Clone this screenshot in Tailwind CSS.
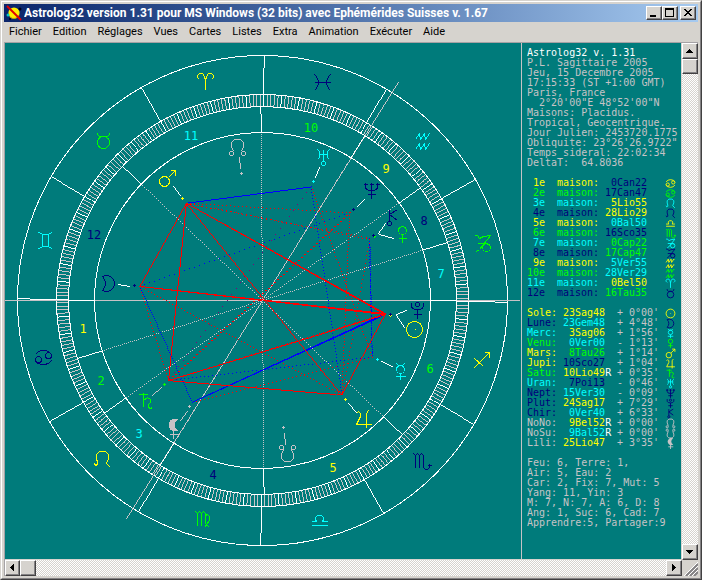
<!DOCTYPE html>
<html lang="fr">
<head>
<meta charset="utf-8">
<meta name="viewport" content="width=device-width, initial-scale=1">
<title>Astrolog32</title>
<script src="https://cdn.jsdelivr.net/npm/@tailwindcss/browser@4"></script>
</head>
<body class="h-screen min-h-[400px] overflow-hidden bg-[#d6d3ce]">
<div class="flex h-full flex-col border border-t-[#d6d3ce] border-l-[#d6d3ce] border-r-[#424142] border-b-[#424142] bg-[#d6d3ce] font-['Roboto',sans-serif]">
<div class="flex min-h-0 flex-1 flex-col border border-t-white border-l-white border-r-[#848284] border-b-[#848284] p-[2px]">

  <header class="flex h-[18px] shrink-0 items-center bg-linear-to-r from-[#0a246a] to-[#a6caf0] px-[2px]">
    <svg class="size-4 shrink-0" viewBox="0 0 16 16" aria-hidden="true">
      <circle cx="8" cy="8" r="5.6" fill="#ffef00"/>
      <path d="M4 12a5.600 5.600 0 0 0 9-2" fill="none" stroke="#c9a000" stroke-width="1"/>
      <path d="M1 1L15 15" stroke="#e00000" stroke-width="2"/>
      <circle cx="2" cy="10" r="1.500" fill="#00c8c8"/>
      <circle cx="14" cy="4" r="1.500" fill="#000018"/>
      <circle cx="4" cy="14" r="1" fill="#000018"/>
    </svg>
    <h1 class="ml-[2px] min-w-0 flex-1 truncate text-[12px] leading-[18px] font-bold text-white">Astrolog32 version 1.31 pour MS Windows (32 bits) avec Ephémérides Suisses v. 1.67</h1>
    <button aria-label="Réduire" class="flex h-[14px] w-4 shrink-0 items-center justify-center border border-t-white border-l-white border-r-[#424142] border-b-[#424142] bg-[#d6d3ce] shadow-[inset_-1px_-1px_0_#848284]"><svg class="h-3 w-[14px]" viewBox="0 0 14 12" shape-rendering="crispEdges"><path d="M3 8h6v2H3z"/></svg></button>
    <button aria-label="Agrandir" class="flex h-[14px] w-4 shrink-0 items-center justify-center border border-t-white border-l-white border-r-[#424142] border-b-[#424142] bg-[#d6d3ce] shadow-[inset_-1px_-1px_0_#848284]"><svg class="h-3 w-[14px]" viewBox="0 0 14 12" shape-rendering="crispEdges"><path fill-rule="evenodd" d="M2 1h9v9H2zM3 3v6h7V3z"/></svg></button>
    <button aria-label="Fermer" class="ml-[2px] flex h-[14px] w-4 shrink-0 items-center justify-center border border-t-white border-l-white border-r-[#424142] border-b-[#424142] bg-[#d6d3ce] shadow-[inset_-1px_-1px_0_#848284]"><svg class="h-3 w-[14px]" viewBox="0 0 14 12" shape-rendering="crispEdges"><path d="M3 2h2v1h1v1h2V3h1V2h2v1h-1v1H9v1H8v1h1v1h1v1h1v1H9V8H8V7H6v1H5v1H3V8h1V7h1V6h1V5H5V4H4V3H3z"/></svg></button>
  </header>

  <nav class="flex h-5 shrink-0 items-center gap-[11px] px-[5px] text-[11px] leading-5 text-black">
    <button>Fichier</button><button>Edition</button><button>Réglages</button><button>Vues</button><button>Cartes</button><button>Listes</button><button>Extra</button><button>Animation</button><button>Exécuter</button><button>Aide</button>
  </nav>

  <div class="flex min-h-0 flex-1 flex-col border-t border-l border-[#a5a2a5]">
    <div class="flex min-h-0 flex-1">
      <main class="flex min-w-0 flex-1 border-r border-b border-[#d6d3ce] bg-[#007b7b]">
        <div class="min-w-0 flex-1">
          <svg id="chart" class="size-full font-['DejaVu_Sans_Mono',monospace] text-[12px]" viewBox="5 43 516 516" shape-rendering="crispEdges" role="img" aria-label="Thème astral"></svg>
        </div>
        <aside class="w-40 shrink-0 overflow-hidden border-l border-[#c6c3c6] pt-[5px] pl-[5px] font-['DejaVu_Sans_Mono',monospace] text-[10px] leading-[10px] text-[#c6c3c6] *:whitespace-pre">
          <h2 class="text-white">Astrolog32 v. 1.31</h2>
          <p>P.L. Sagittaire 2005</p>
          <p>Jeu, 15 Decembre 2005</p>
          <p>17:15:33 (ST +1:00 GMT)</p>
          <p>Paris, France</p>
          <p>  2°20'00"E 48°52'00"N</p>
          <p>Maisons: Placidus.</p>
          <p>Tropical, Geocentrique.</p>
          <p>Jour Julien: 2453720.1775</p>
          <p>Obliquite: 23°26'26.9722"</p>
          <p>Temps sideral: 22:02:34</p>
          <p>DeltaT:  64.8036</p>
          <table class="mt-[10px] table-fixed border-collapse" aria-label="Maisons"><tbody id="houses"></tbody></table>
          <table class="mt-[10px] table-fixed border-collapse" aria-label="Planètes"><tbody id="planets"></tbody></table>
          <p class="mt-[10px]">Feu: 6, Terre: 1,</p>
          <p>Air: 5, Eau: 2</p>
          <p>Car: 2, Fix: 7, Mut: 5</p>
          <p>Yang: 11, Yin: 3</p>
          <p>M: 7, N: 7, A: 6, D: 8</p>
          <p>Ang: 1, Suc: 6, Cad: 7</p>
          <p>Apprendre:5, Partager:9</p>
        </aside>
      </main>
      <div class="flex w-4 shrink-0 flex-col bg-[repeating-conic-gradient(#ffffff_0_25%,#d6d3ce_0_50%)] bg-[length:2px_2px]">
        <button aria-label="Haut" class="flex h-4 shrink-0 items-center justify-center border border-t-white border-l-white border-r-[#424142] border-b-[#424142] bg-[#d6d3ce] shadow-[inset_-1px_-1px_0_#848284]"><svg class="size-2" viewBox="0 0 8 8" shape-rendering="crispEdges"><path d="M3 2h1v1h1v1h1v1h1v1H0V5h1V4h1V3h1z"/></svg></button>
        <button aria-label="Position verticale" class="h-[15px] shrink-0 border border-t-white border-l-white border-r-[#424142] border-b-[#424142] bg-[#d6d3ce] shadow-[inset_-1px_-1px_0_#848284]"></button>
        <div class="flex-1"></div>
        <button aria-label="Bas" class="flex h-4 shrink-0 items-center justify-center border border-t-white border-l-white border-r-[#424142] border-b-[#424142] bg-[#d6d3ce] shadow-[inset_-1px_-1px_0_#848284]"><svg class="size-2" viewBox="0 0 8 8" shape-rendering="crispEdges"><path d="M0 2h7v1H6v1H5v1H4v1H3V5H2V4H1V3H0z"/></svg></button>
      </div>
    </div>
    <div class="flex h-4 shrink-0">
      <div class="flex min-w-0 flex-1 bg-[repeating-conic-gradient(#ffffff_0_25%,#d6d3ce_0_50%)] bg-[length:2px_2px]">
        <button aria-label="Gauche" class="flex w-[15px] shrink-0 items-center justify-center border border-t-white border-l-white border-r-[#424142] border-b-[#424142] bg-[#d6d3ce] shadow-[inset_-1px_-1px_0_#848284]"><svg class="size-2" viewBox="0 0 8 8" shape-rendering="crispEdges"><path d="M5 0v7H4V6H3V5H2V4H1V3h1V2h1V1h1V0z"/></svg></button>
        <button aria-label="Position horizontale" class="w-4 shrink-0 border border-t-white border-l-white border-r-[#424142] border-b-[#424142] bg-[#d6d3ce] shadow-[inset_-1px_-1px_0_#848284]"></button>
        <div class="flex-1"></div>
        <button aria-label="Droite" class="flex w-4 shrink-0 items-center justify-center border border-t-white border-l-white border-r-[#424142] border-b-[#424142] bg-[#d6d3ce] shadow-[inset_-1px_-1px_0_#848284]"><svg class="size-2" viewBox="0 0 8 8" shape-rendering="crispEdges"><path d="M2 0h1v1h1v1h1v1h1v1H5v1H4v1H3v1H2z"/></svg></button>
      </div>
      <svg class="size-4 shrink-0" viewBox="0 0 16 16" aria-hidden="true"><path d="M4 16L16 4M8 16L16 8M12 16L16 12" stroke="#848284" stroke-width="2"/><path d="M2 16L16 2M6 16L16 6M10 16L16 10" stroke="#fff"/></svg>
    </div>
  </div>
</div>
</div>

<script>
const YELLOW = '#ffff00', GREEN = '#00ff00', CYAN = '#00ffff', NAVY = '#00007b', GRAY = '#c6c3c6', WHITE = '#ffffff', RED = '#ff0000', BLUE = '#0000ff', PURPLE = '#84007b';
const textClass = {
  [YELLOW]: 'text-[#ffff00]', [GREEN]: 'text-[#00ff00]', [CYAN]: 'text-[#00ffff]',
  [NAVY]: 'text-[#00007b]', [GRAY]: 'text-[#c6c3c6]'
};
const circ = (x, y, r) => `<circle cx="${x}" cy="${y}" r="${r}"/>`;
const path = d => `<path d="${d}"/>`;

// Glyphs are drawn around (0,0) in a box of -10..10.
const glyphs = {
  Bel: path('M-6 -2L-8 -4V-6L-6 -8H-3L-1 -5L0 -1L1 -5L3 -8H6L8 -6V-4L6 -2M0 -1V8'),
  Tau: path('M-6 -8V-6L-4 -4H4L6 -6V-8') + circ(0, 2, 6),
  Gem: path('M-7 -8Q0 -4 7 -8M-7 8Q0 4 7 8M-3 -6V6M3 -6V6'),
  Can: circ(-5, 2, 3) + circ(5, -2, 3) + path('M-8 -3Q-5 -7 0 -7Q7 -7 8 -2M8 3Q5 7 0 7Q-7 7 -8 2'),
  Lio: path('M-8 4L-7 6L-5 5V3L-6 -1V-5L-3 -8H3L6 -5V-1L4 4L8 8'),
  Vie: path('M-7 -8L-5 -6V6M-5 -6L-3 -8L-1 -6V6M-1 -6L1 -8L3 -6V4L7 8M3 -4L5 -5L7 -3V1L2 8'),
  Bal: path('M-8 5H8M-8 1H-3L-4 -1V-3L-2 -5H2L4 -3V-1L3 1H8'),
  Sco: path('M-8 -8L-6 -6V6M-6 -6L-4 -8L-2 -6V6M-2 -6L0 -8L2 -6V6L4 8H6L8 6V2M6 4H10'),
  Sag: path('M-8 8L8 -8M3 -8H8V-3M-7 -2L2 6'),
  Cap: path('M-8 -8H-5L-3 -5L1 -7L8 -8L1 1L-3 6L-6 8M-5 0H3L7 1') + circ(4, 4, 4),
  Ver: path('M-8 -2L-4 -8L-3 -2L1 -8L2 -2L6 -8L7 -7M-8 8L-4 2L-3 8L1 2L2 8L6 2L7 3'),
  Poi: path('M-8 -8Q0 0 -8 8M8 -8Q0 0 8 8M-8 0H8'),
  Sole: circ(0, 0, 8) + path('M0 0H1'),
  Lune: path('M-6 -7Q-2 -9 2 -7Q6 -4 6 0Q6 4 2 7Q-2 9 -6 7Q0 0 -6 -7'),
  Merc: circ(0, -2, 4) + path('M-4 -8L-2 -6H2L4 -8M0 2V8M-5 5H5'),
  Venu: circ(0, -4, 4) + path('M0 0V8M-4 4H4'),
  Mars: circ(-3, 3, 5) + path('M1 -1L8 -8M3 -8H8V-3'),
  Jupi: path('M-7 -5L-5 -7L-3 -5V-2L-7 6H8M5 -8L3 -5V9'),
  Satu: path('M-2 -8V6M-7 -6H2M-2 0L2 -3L5 -1V2L3 4V7L5 8L7 7'),
  Uran: path('M-6 -8L-4 -6V0L-6 2M6 -8L4 -6V0L6 2M-4 -3H4M0 -8V4') + circ(0, 6, 2),
  Nept: path('M-6 -8V-4Q-6 0 0 0Q6 0 6 -4V-8M0 -8V8M-4 4H4M-8 -6H-4M4 -6H8M-2 -6H2'),
  Plut: circ(0, -6, 2) + path('M-6 -8V-4Q-5 -1 0 -1Q5 -1 6 -4V-8M0 -1V8M-4 4H4'),
  Chir: circ(-3, 6, 2) + path('M-3 -8V4M5 -8L-3 -3L5 3'),
  NoNo: circ(-6, 6, 2) + circ(6, 6, 2) + path('M-4 4L-6 -1V-5L-3 -8H3L6 -5V-1L4 4'),
  NoSu: circ(-6, -6, 2) + circ(6, -6, 2) + path('M-4 -4L-6 1V5L-3 8H3L6 5V1L4 -4'),
  Lili: '<path fill="currentColor" stroke="none" d="M5 -9A6.500 6.500 0 1 0 5 2A6 6 0 0 1 5 -9Z"/>' + path('M0 2V10M-4 6H5')
};

const signs = [
  ['Bel', 205, 81, YELLOW], ['Tau', 103, 140, GREEN], ['Gem', 45, 240, CYAN], ['Can', 43, 357, NAVY],
  ['Lio', 102, 459, YELLOW], ['Vie', 202, 519, GREEN], ['Bal', 319, 520, CYAN], ['Sco', 421, 461, NAVY],
  ['Sag', 481, 360, YELLOW], ['Cap', 482, 243, GREEN], ['Ver', 423, 141, CYAN], ['Poi', 322, 82, NAVY]
];
const signColor = Object.fromEntries(signs.map(s => [s[0], s[3]]));
signColor.Bel = YELLOW;

// number, position, longitude, label centre
const houses = [
  ['1', ' 0Can22', 90.37, 83, 328], ['2', '17Can47', 107.78, 101, 380], ['3', ' 5Lio55', 125.92, 139, 433],
  ['4', '28Lio29', 148.48, 213, 474], ['5', ' 0Bal50', 180.83, 333, 467], ['6', '16Sco35', 226.58, 430, 368],
  ['7', ' 0Cap22', 270.37, 441, 273], ['8', '17Cap47', 287.78, 424, 220], ['9', ' 5Ver55', 305.92, 386, 168],
  ['10', '28Ver29', 328.48, 311, 127], ['11', ' 0Bel50', 0.83, 191, 135], ['12', '16Tau35', 46.58, 94, 234]
];
const houseColors = [YELLOW, GREEN, CYAN, NAVY];

// name, position, retrograde, latitude, longitude, colour, glyph centre, pointer line
const planets = [
  ['Sole', '23Sag48', ' ', "+ 0°00'", 263.8, YELLOW, 414, 329, [396, 315, 404, 327]],
  ['Lune', '23Gem48', ' ', "+ 4°48'", 83.8, NAVY, 108, 283, [118, 284, 129, 286]],
  ['Merc', ' 3Sag06', ' ', "+ 1°56'", 243.1, CYAN, 400, 371, [381, 361, 392, 366]],
  ['Venu', ' 0Ver00', ' ', "- 1°13'", 300, GREEN, 402, 234, [379, 234, 393, 238]],
  ['Mars', ' 8Tau26', ' ', "+ 1°14'", 38.43, YELLOW, 167, 178, [173, 186, 180, 195]],
  ['Jupi', '10Sco27', ' ', "+ 1°04'", 220.45, YELLOW, 363, 418, [348, 403, 356, 412]],
  ['Satu', '10Lio49', 'R', "+ 0°35'", 130.82, GREEN, 145, 400, [161, 387, 152, 395]],
  ['Uran', ' 7Poi13', ' ', "- 0°46'", 337.22, CYAN, 323, 157, [319, 167, 315, 177]],
  ['Nept', '15Ver30', ' ', "- 0°09'", 315.5, NAVY, 371, 190, [364, 199, 357, 206]],
  ['Plut', '24Sag17', ' ', "+ 7°29'", 264.28, NAVY, 417, 310, [406, 310, 396, 314]],
  ['Chir', ' 0Ver40', ' ', "+ 6°33'", 300.67, NAVY, 392, 217, [385, 223, 378, 233]],
  ['NoNo', ' 9Bel52', 'R', "+ 0°00'", 9.87, GRAY, 237, 147, [239, 157, 240, 168]],
  ['NoSu', ' 9Bal52', 'R', "+ 0°00'", 189.87, GRAY, 287, 453, [284, 433, 285, 444]],
  ['Lili', '25Lio47', ' ', "+ 3°35'", 145.78, GRAY, 173, 428, [187, 411, 180, 420]]
];

// pair, colour, pixel step (1 = solid), thickness
const aspects = [
  ['Uran', 'Satu', PURPLE, 6, 1], ['Lune', 'Nept', BLUE, 5, 1], ['Merc', 'Satu', BLUE, 4, 1],
  ['Uran', 'Jupi', BLUE, 3, 1], ['Venu', 'Merc', BLUE, 2, 1], ['Chir', 'Merc', BLUE, 3, 1], ['Lune', 'Lili', BLUE, 2, 1],
  ['Mars', 'Nept', RED, 4, 1], ['Mars', 'Venu', RED, 4, 1], ['Mars', 'Chir', RED, 5, 1],
  ['Uran', 'Merc', RED, 3, 1], ['Nept', 'Jupi', RED, 3, 1], ['Venu', 'Jupi', RED, 4, 1], ['Merc', 'Lili', RED, 4, 1],
  ['Lune', 'Satu', RED, 3, 1], ['Lune', 'Jupi', RED, 3, 1], ['Nept', 'Satu', RED, 3, 2], ['Plut', 'Satu', RED, 2, 1],
  ['Mars', 'Uran', BLUE, 1, 1], ['Sole', 'Lili', BLUE, 1, 1], ['Plut', 'Lili', BLUE, 1, 1],
  ['Mars', 'Lune', RED, 1, 1], ['Mars', 'Satu', RED, 1, 1], ['Mars', 'Jupi', RED, 1, 1],
  ['Mars', 'Sole', RED, 1, 1], ['Mars', 'Plut', RED, 1, 1], ['Lune', 'Sole', RED, 1, 1], ['Lune', 'Plut', RED, 1, 1],
  ['Satu', 'Sole', RED, 1, 1], ['Satu', 'Jupi', RED, 1, 1], ['Jupi', 'Sole', RED, 1, 1]
];

const CX = 262, CY = 300, ASC = 90.37;
const at = (lon, r) => {
  const a = (180 + lon - ASC) * Math.PI / 180;
  return [CX + r * Math.cos(a), CY - r * Math.sin(a)];
};
// Plots a line pixel by pixel, keeping one pixel in every `step`.
const plot = (x1, y1, x2, y2, color, step = 1, size = 1) => {
  const n = Math.max(1, Math.round(Math.max(Math.abs(x2 - x1), Math.abs(y2 - y1))));
  let d = '';
  for (let i = 0; i <= n; i += step)
    d += `M${Math.round(x1 + (x2 - x1) * i / n)} ${Math.round(y1 + (y2 - y1) * i / n)}h${size}v1h-${size}z`;
  return `<path d="${d}" fill="${color}"/>`;
};
const spoke = (lon, r1, r2, color, step) => plot(...at(lon, r1), ...at(lon, r2), color, step);
const place = (name, x, y, color) =>
  `<g transform="translate(${x + .5} ${y + .5})" color="${color}" stroke="${color}" fill="none">${glyphs[name]}</g>`;

let out = '';
for (let deg = 0; deg < 360; deg++) out += spoke(deg, 194, 206, deg % 5 ? GRAY : WHITE);
for (const r of [168, 194, 206, 245]) out += `<circle cx="262.5" cy="300.5" r="${r}" fill="none" stroke="${WHITE}"/>`;
houses.forEach(h => { out += spoke(h[2], 0, 168, GRAY, 2); });
out += spoke(ASC, -257, 257, GRAY) + spoke(328.48, -257, 257, GRAY);
houses.forEach(h => { out += spoke(h[2], 168, 194, WHITE); });
for (let s = 0; s < 12; s++) out += spoke(s * 30, 206, 245, WHITE);
const lonOf = Object.fromEntries(planets.map(p => [p[0], p[4]]));
for (const [a, b, color, step, size] of aspects)
  out += plot(...at(lonOf[a], 123.5), ...at(lonOf[b], 123.5), color, step, size);
for (const [name, x, y, color] of signs) out += place(name, x, y, color);
for (const [name, , , , lon, color, x, y, line] of planets) {
  const [px, py] = at(lon, 129).map(Math.round);
  out += place(name, x, y, color) + plot(...line, color === GRAY || name === 'Satu' ? GRAY : WHITE);
  out += `<path d="M${px - 1} ${py}h3v1h-3zM${px} ${py - 1}h1v3h-1z" fill="${color}"/>`;
}
houses.forEach((h, i) => {
  out += `<text x="${h[3]}" y="${h[4] + 5}" text-anchor="middle" fill="${houseColors[i % 4]}">${h[0]}</text>`;
});
document.getElementById('chart').innerHTML = out;

const icon = name =>
  `<svg class="size-[11px]" viewBox="-10 -10 20 20" fill="none" stroke="currentColor" stroke-width="1.6">${glyphs[name]}</svg>`;
document.getElementById('houses').innerHTML = houses.map((h, i) => {
  const own = textClass[houseColors[i % 4]], sign = h[1].slice(2, 5);
  return `<tr class="h-[10px] ${own}"><th class="w-[30px] p-0 text-left font-normal">${(h[0] + 'e').padStart(3)}</th>` +
    `<td class="w-12 p-0">maison:</td><td class="w-[60px] p-0 ${textClass[signColor[sign]]}">${h[1]}</td>` +
    `<td class="flex h-[10px] w-[11px] items-center p-0">${icon(sign)}</td></tr>`;
}).join('');
document.getElementById('planets').innerHTML = planets.map(p => {
  const own = textClass[p[5]], sign = p[1].slice(2, 5);
  return `<tr class="h-[10px]"><th class="w-9 p-0 text-left font-normal ${own}">${p[0]}:</th>` +
    `<td class="w-[54px] p-0 ${textClass[signColor[sign]]}">${p[1]}<span class="text-white">${p[2]}</span></td>` +
    `<td class="w-12 p-0">${p[3]}</td><td class="flex h-[10px] w-[11px] items-center p-0 ${own}">${icon(p[0])}</td></tr>`;
}).join('');
</script>
</body>
</html>
